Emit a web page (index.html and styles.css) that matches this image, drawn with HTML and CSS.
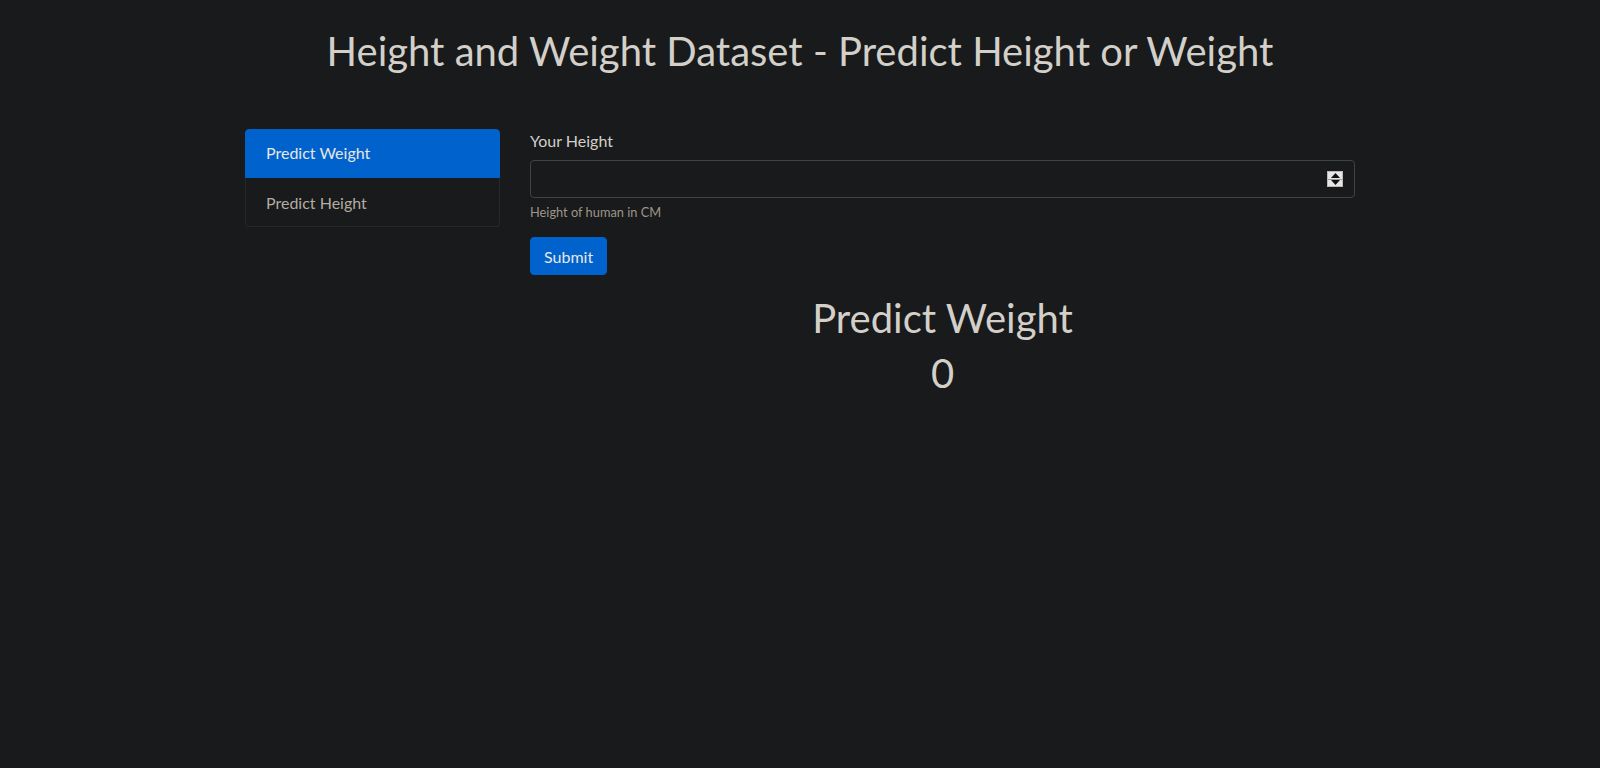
FILE: index.html
```html
<!DOCTYPE html>
<html lang="en">
<head>
<meta charset="utf-8">
<title>Height and Weight Dataset</title>
<link rel="stylesheet" href="styles.css">
</head>
<body>
<h1 class="page-title">Height and Weight Dataset - Predict Height or Weight</h1>
<div class="container">
  <div class="col-side">
    <div class="list-group">
      <a class="list-item active">Predict Weight</a>
      <a class="list-item second">Predict Height</a>
    </div>
  </div>
  <div class="col-main">
    <form class="form">
      <div class="form-group">
        <label class="label">Your Height</label>
        <div class="input-wrap">
          <div class="input"></div>
          <div class="spinner">
            <span class="spin-btn"><svg width="9" height="5" viewBox="0 0 9 5"><path d="M0 5 L4.5 0 L9 5 Z" fill="#111"/></svg></span>
            <span class="spin-btn"><svg width="9" height="5" viewBox="0 0 9 5"><path d="M0 0 L9 0 L4.5 5 Z" fill="#111"/></svg></span>
          </div>
        </div>
        <small class="help">Height of human in CM</small>
      </div>
      <button type="button" class="btn">Submit</button>
    </form>
    <div class="result">
      <h1 class="result-title">Predict Weight</h1>
      <h1 class="result-value">0</h1>
    </div>
  </div>
</div>
</body>
</html>
```
FILE: styles.css
```css
html, body {
  margin: 0;
  padding: 0;
  background: #181a1b;
}
body {
  font-family: Lato, "Liberation Sans", sans-serif;
  font-size: 16px;
  line-height: 24px;
  color: #d3cfc9;
}
.page-title {
  margin: 27px 0 54px;
  font-size: 40px;
  line-height: 48px;
  font-weight: 400;
  text-align: center;
  color: #d3cfc9;
}
.container {
  width: 1110px;
  margin: 0 auto;
  display: flex;
  align-items: flex-start;
}
.col-side {
  width: 255px;
  flex: none;
}
.col-main {
  flex: 1;
  margin-left: 30px;
}
.list-group {
  display: flex;
  flex-direction: column;
}
.list-item {
  display: block;
  padding: 11px 20px 12px;
  border: 1px solid #26292b;
  color: #b2aca2;
  text-decoration: none;
}
.list-item.active {
  background: #0062cc;
  border-color: #0062cc;
  color: #e8e6e3;
  border-radius: 4px 4px 0 0;
}
.list-item.second {
  border-top: 0;
  padding: 13px 20px 11px;
  border-radius: 0 0 4px 4px;
}
.form-group {
  margin-bottom: 15px;
}
.label {
  display: block;
  margin-bottom: 7px;
  color: #d3cfc9;
}
.input-wrap {
  position: relative;
}
.input {
  height: 36px;
  border: 1px solid #3e4446;
  border-radius: 4px;
  background: #181a1b;
}
.spinner {
  position: absolute;
  right: 12px;
  top: 11px;
  width: 16px;
  height: 16px;
  display: flex;
  flex-direction: column;
  background: #e6e6e6;
  border: 1px solid #b9b9b9;
  box-sizing: border-box;
}
.spin-btn {
  flex: 1;
  display: flex;
  align-items: center;
  justify-content: center;
}
.spin-btn + .spin-btn {
  border-top: 1px solid #9a9a9a;
}
.help {
  display: block;
  margin-top: 5px;
  font-size: 12.8px;
  line-height: 19.2px;
  color: #9e9689;
}
.btn {
  display: block;
  height: 38px;
  padding: 7px 13px 5px;
  font-family: Lato, "Liberation Sans", sans-serif;
  font-size: 16px;
  line-height: 24px;
  color: #e8e6e3;
  background: #0062cc;
  border: 1px solid #0062cc;
  border-radius: 4px;
}
.result {
  margin-top: 19px;
  text-align: center;
}
.result-title, .result-value {
  margin: 0 0 7px;
  font-size: 40px;
  line-height: 48px;
  font-weight: 400;
  color: #d3cfc9;
}
```
